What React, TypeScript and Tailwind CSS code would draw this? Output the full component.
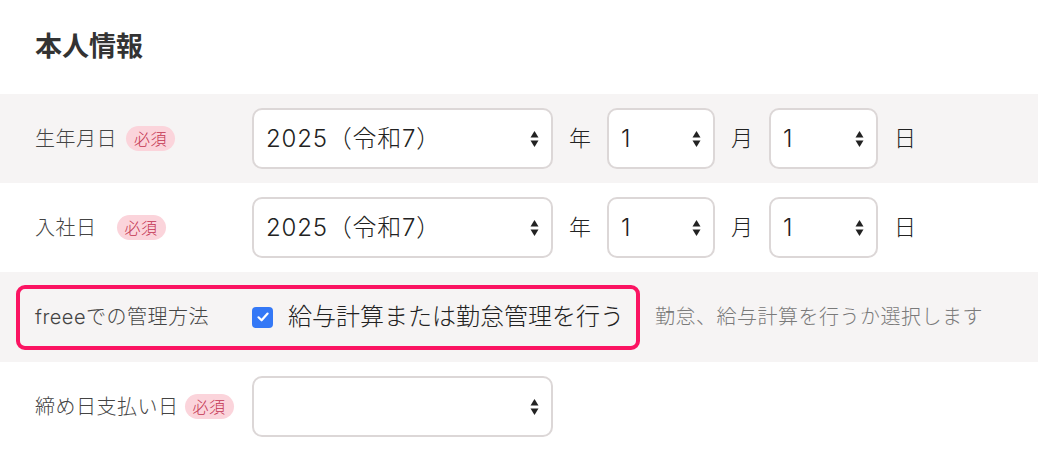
import type { ReactNode } from 'react'

const font = { fontFamily: 'Inter, "Noto Sans CJK JP", "Noto Sans", sans-serif' }

function Arrows() {
  return (
    <svg width="9" height="18" viewBox="0 0 9 18" className="shrink-0">
      <path d="M4.5 1 L8.5 7.5 L0.5 7.5 Z" fill="#222" />
      <path d="M4.5 17 L8.5 10.5 L0.5 10.5 Z" fill="#222" />
    </svg>
  )
}

function FakeSelect({ value, width }: { value?: string; width: string }) {
  return (
    <div
      className={`flex h-[61px] ${width} shrink-0 items-center justify-between rounded-[10px] border-2 border-[#dcd7d7] bg-white pr-[12px] pl-[12px] text-[24px] font-light tracking-[0.8px] text-[#222]`}
    >
      <span>{value ?? ''}</span>
      <Arrows />
    </div>
  )
}

function Badge({ className = '' }: { className?: string }) {
  return (
    <span
      className={`inline-flex h-[25px] items-center rounded-full bg-[#fbd4db] px-[8px] text-[16px] leading-none font-light text-[#c33350] ${className}`}
    >
      必須
    </span>
  )
}

function Row({ children, grey }: { children: ReactNode; grey?: boolean }) {
  return <div className={`flex h-[89px] items-center pl-[35px] ${grey ? 'bg-[#f6f4f4]' : 'bg-white'}`}>{children}</div>
}

function Label({ text, badgeGap }: { text: string; badgeGap?: string }) {
  return (
    <div className="flex w-[217px] shrink-0 items-center text-[20px] font-light tracking-[0.5px] text-[#444]">
      <span>{text}</span>
      {badgeGap && <Badge className={badgeGap} />}
    </div>
  )
}

function DateInputs() {
  return (
    <div className="flex items-center gap-4 text-[22px] font-light text-[#222]">
      <FakeSelect value="2025（令和7）" width="w-[301px]" />
      <span>年</span>
      <FakeSelect value="1" width="w-[108px]" />
      <span>月</span>
      <FakeSelect value="1" width="w-[109px]" />
      <span>日</span>
    </div>
  )
}

export default function App() {
  return (
    <div className="h-[450px] w-[1038px] overflow-hidden bg-white" style={font}>
      <div className="flex h-[94px] items-center pl-[35px]">
        <h2 className="text-[27px] font-bold text-[#333]">本人情報</h2>
      </div>

      <Row grey>
        <Label text="生年月日" badgeGap="ml-[9px]" />
        <DateInputs />
      </Row>

      <Row>
        <Label text="入社日" badgeGap="ml-[20px]" />
        <DateInputs />
      </Row>

      <div className="flex h-[90px] items-center bg-[#f6f4f4] pl-[16px]">
        <div className="flex h-[65px] items-center rounded-[9px] border-4 border-[#fb1462] pr-[12px] pl-[15px]">
          <div className="w-[217px] shrink-0 text-[20px] font-light tracking-[0.5px] text-[#444]">freeeでの管理方法</div>
          <span className="flex h-[21px] w-[21px] items-center justify-center rounded-[4px] bg-[#3478f6]">
            <svg width="14" height="14" viewBox="0 0 14 14">
              <path d="M2.5 7.3 L5.6 10.3 L11.6 3.6" fill="none" stroke="white" strokeWidth="2.2" strokeLinecap="round" strokeLinejoin="round" />
            </svg>
          </span>
          <span className="ml-[15px] text-[24px] font-light text-[#222]">給与計算または勤怠管理を行う</span>
        </div>
        <span className="ml-[15px] text-[20px] font-light tracking-[0.5px] text-[#7a7a7a]">勤怠、給与計算を行うか選択します</span>
      </div>

      <Row>
        <Label text="締め日支払い日" badgeGap="ml-[6px]" />
        <FakeSelect width="w-[301px]" />
      </Row>
    </div>
  )
}
